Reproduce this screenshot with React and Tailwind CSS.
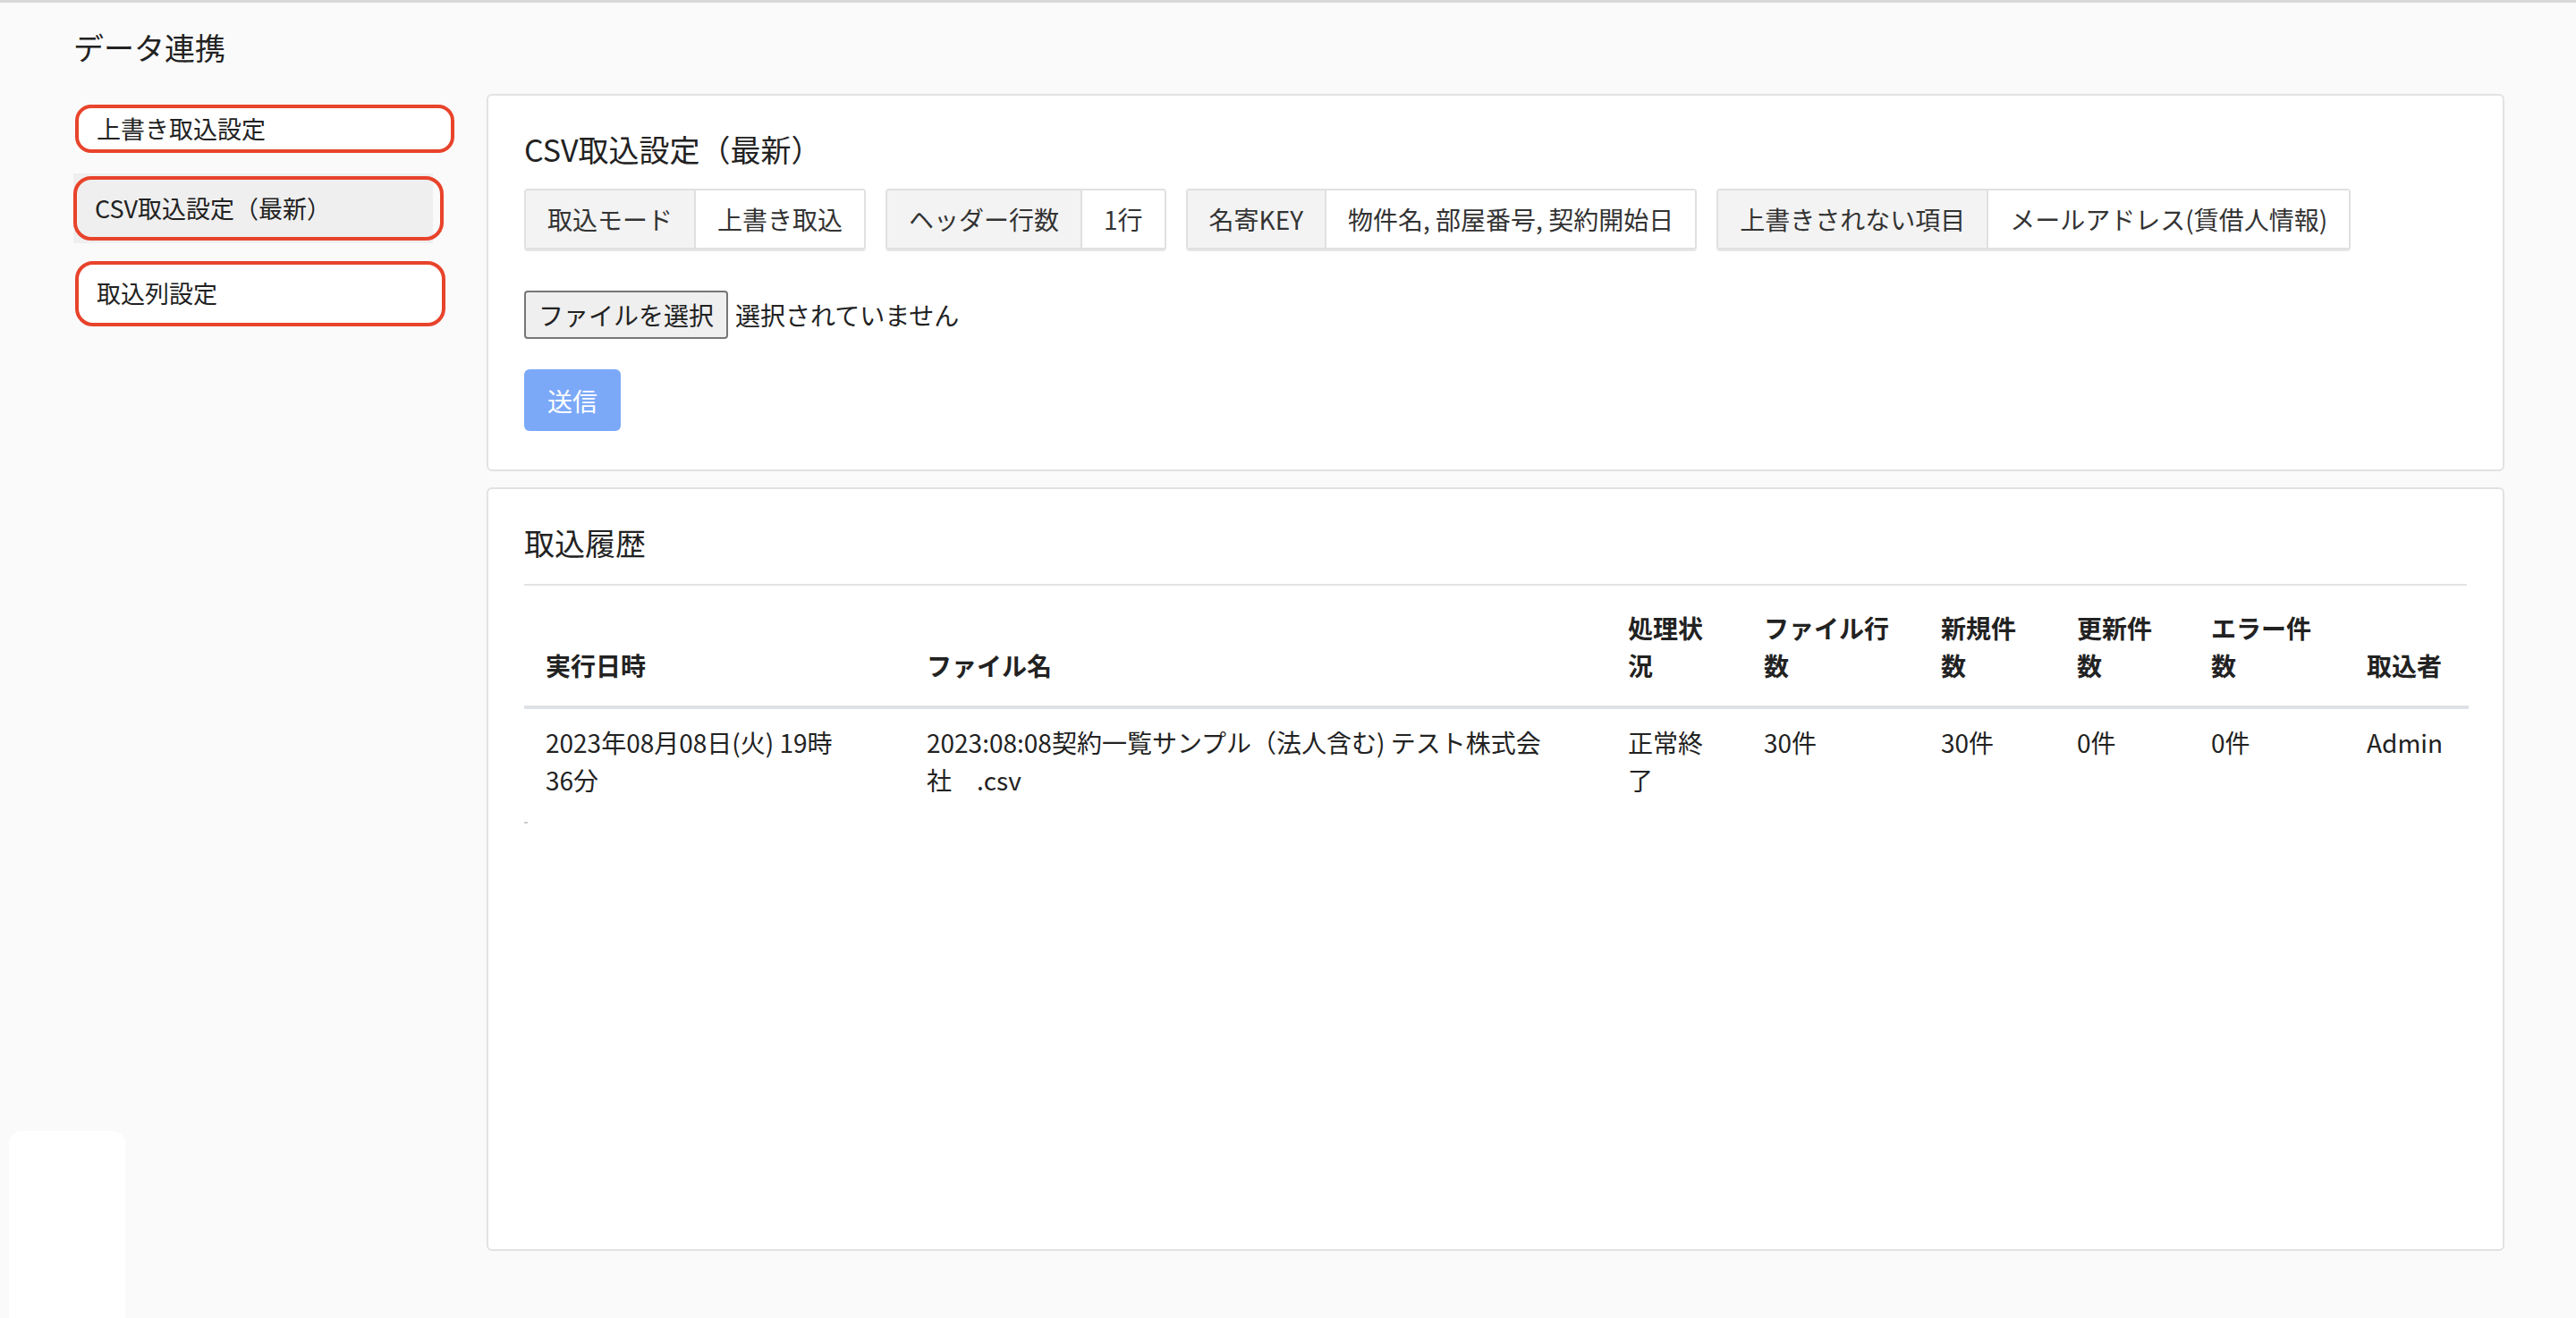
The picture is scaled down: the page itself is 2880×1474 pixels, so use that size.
export default function App() {
  const font = { fontFamily: '"Noto Sans CJK JP", "Noto Sans", sans-serif' };
  const tags = [
    ["取込モード", "上書き取込"],
    ["ヘッダー行数", "1行"],
    ["名寄KEY", "物件名, 部屋番号, 契約開始日"],
    ["上書きされない項目", "メールアドレス(賃借人情報)"],
  ];
  const cols = [
    ["実行日時", 426], ["ファイル名", 784], ["処理状況", 152], ["ファイル行数", 198],
    ["新規件数", 152], ["更新件数", 150], ["エラー件数", 174], ["取込者", 138],
  ];
  const row = [
    <>2023年08月08日(火) 19時<br />36分</>,
    "2023:08:08契約一覧サンプル（法人含む) テスト株式会社　.csv", "正常終了", "30件", "30件", "0件", "0件", "Admin"];
  return (
    <div style={font} className="w-[2880px] h-[1474px] bg-[#fafafa] border-t-[3px] border-[#d8d8d8] relative text-[#222] overflow-hidden">
      <div className="pl-[82px] pt-[26px] text-[34px] leading-[48px]">データ連携</div>
      <div className="flex mt-[30px] pl-[82px]">
        <div className="w-[428px] shrink-0 flex flex-col text-[27px]">
          <div className="h-[54px] mt-[10px] ml-[2px] w-[424px] border-[4px] border-[#e8432b] rounded-[18px] bg-white flex items-center pl-[20px]">上書き取込設定</div>
          <div className="mt-[23px] w-[402px] h-[78px] bg-[#efefef] flex items-center">
            <div className="h-[72px] w-[414px] border-[4px] border-[#e8432b] rounded-[20px] flex items-center pl-[20px] shrink-0">CSV取込設定（最新）</div>
          </div>
          <div className="mt-[20px] ml-[2px] w-[414px] h-[73px] border-[4px] border-[#e8432b] rounded-[20px] bg-white flex items-center pl-[20px]">取込列設定</div>
        </div>
        <div className="ml-[34px] w-[2256px] flex flex-col gap-[18px] -mt-[2px]">
          <div className="h-[422px] bg-white border-2 border-[#e2e2e2] rounded-[6px] px-[40px] pt-[36px]">
            <div className="text-[34px] leading-[48px]">CSV取込設定（最新）</div>
            <div className="flex gap-[22px] mt-[20px]">
              {tags.map(([a, b]) => (
                <div key={a} className="flex h-[68px] border-2 border-[#e0e0e0] rounded-[4px] text-[28px] shadow-[0_2px_0_#e6e6e6]">
                  <div className="bg-[#f3f3f3] px-[24px] flex items-center border-r-2 border-[#e0e0e0] text-[#333]">{a}</div>
                  <div className="bg-white px-[24px] flex items-center text-[#333]">{b}</div>
                </div>
              ))}
            </div>
            <div className="flex items-center mt-[46px] text-[28px]">
              <div className="h-[54px] px-[14px] flex items-center bg-[#efefef] border-2 border-[#767676] rounded-[4px]">ファイルを選択</div>
              <span className="ml-[8px]">選択されていません</span>
            </div>
            <div className="mt-[34px] w-[108px] h-[69px] bg-[#7ba9f8] rounded-[6px] text-white text-[28px] flex items-center justify-center">送信</div>
          </div>
          <div className="h-[854px] bg-white border-2 border-[#e2e2e2] rounded-[6px] px-[40px] pt-[36px]">
            <div className="text-[34px] leading-[48px] pb-[22px] border-b-2 border-[#e3e3e3]">取込履歴</div>
            <table className="table-fixed w-[2174px] text-[28px]">
              <colgroup>{cols.map(([c, w]) => <col key={c} style={{ width: w }} />)}</colgroup>
              <thead>
                <tr className="border-b-[4px] border-[#dee2e6]">
                  {cols.map(([c]) => (
                    <th key={c} className="text-left font-bold align-bottom px-[24px] pt-[26px] pb-[24px] leading-[42px]">{c}</th>
                  ))}
                </tr>
              </thead>
              <tbody>
                <tr>
                  {row.map((v, i) => (
                    <td key={i} className="align-top px-[24px] pt-[16px] pb-[26px] leading-[42px]">{v}</td>
                  ))}
                </tr>
              </tbody>
            </table>
            <div className="w-[4px] h-[2px] bg-[#ccc]" />
          </div>
        </div>
      </div>
      <div className="absolute left-[10px] top-[1262px] w-[130px] h-[240px] bg-white rounded-[14px]" />
    </div>
  );
}
